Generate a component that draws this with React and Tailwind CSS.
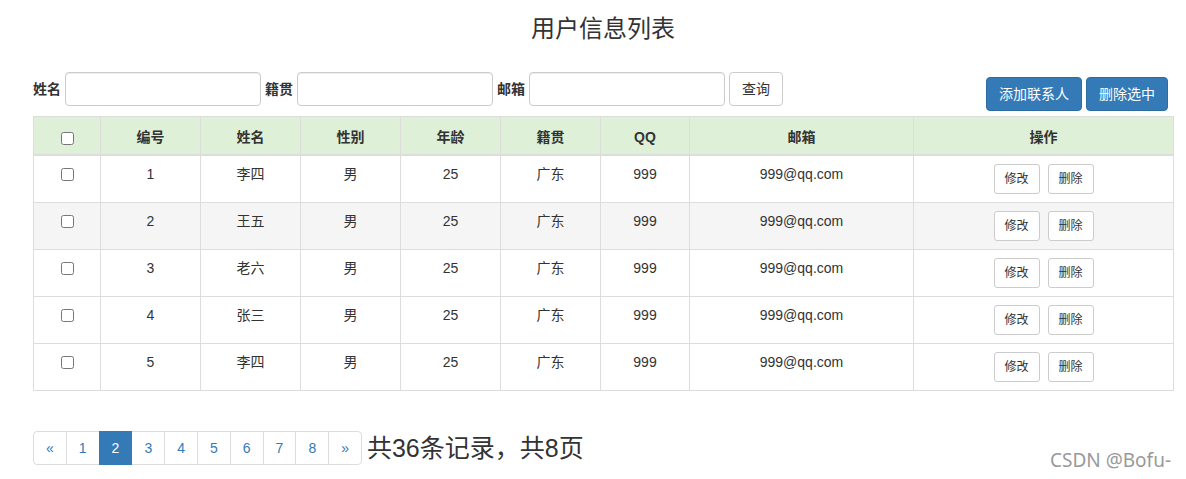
import React from "react";

const rows = [
  { id: 1, name: "李四" },
  { id: 2, name: "王五", hover: true },
  { id: 3, name: "老六" },
  { id: 4, name: "张三" },
  { id: 5, name: "李四" },
];

const cols = [
  { w: "w-[67px]", label: null },
  { w: "w-[100px]", label: "编号" },
  { w: "w-[100px]", label: "姓名" },
  { w: "w-[100px]", label: "性别" },
  { w: "w-[100px]", label: "年龄" },
  { w: "w-[100px]", label: "籍贯" },
  { w: "w-[89px]", label: "QQ" },
  { w: "w-[224px]", label: "邮箱" },
  { w: "w-[260px]", label: "操作" },
];

function Field({ label }) {
  return (
    <>
      <label className="font-bold text-[14px] leading-[20px] text-[#333]">{label}</label>
      <input
        type="text"
        className="w-[196px] h-[34px] border border-[#ccc] rounded-[4px] px-3 shadow-[inset_0_1px_1px_rgba(0,0,0,0.075)] bg-white outline-none"
      />
    </>
  );
}

export default function App() {
  const pages = ["«", "1", "2", "3", "4", "5", "6", "7", "8", "»"];
  return (
    <div className="relative w-[1186px] h-[479px] bg-white text-[#333] font-['Liberation_Sans','Noto_Sans_CJK_SC',sans-serif] text-[14px] leading-[20px]">
      <div className="ml-[33px] w-[1140px] pt-[16px]">
        <h3 className="text-center text-[24px] leading-[26px] font-normal text-[#333]">用户信息列表</h3>

        <div className="mt-[30px] h-[44px] flex justify-between items-start">
          <div className="flex items-center gap-1">
            <Field label="姓名" />
            <Field label="籍贯" />
            <Field label="邮箱" />
            <button className="h-[34px] px-3 border border-[#ccc] rounded-[4px] bg-white text-[#333] text-[14px]">查询</button>
          </div>
          <div className="flex gap-1 mt-[5px] mr-[5px]">
            <button className="h-[34px] w-[96px] border border-[#2e6da4] rounded-[4px] bg-[#337ab7] text-white text-[14px]">添加联系人</button>
            <button className="h-[34px] w-[82px] border border-[#2e6da4] rounded-[4px] bg-[#337ab7] text-white text-[14px]">删除选中</button>
          </div>
        </div>

        <table className="w-[1140px] border-collapse table-fixed border border-[#ddd]">
          <thead>
            <tr className="bg-[#dff0d8]">
              {cols.map((c, i) => (
                <th
                  key={i}
                  className={`${c.w} border border-[#ddd] border-b-2 px-2 pt-2 pb-[7px] font-bold text-center align-bottom h-[38px]`}
                >
                  {c.label === null ? (
                    <input type="checkbox" className="w-[13px] h-[13px] align-middle mt-[1px]" />
                  ) : (
                    c.label
                  )}
                </th>
              ))}
            </tr>
          </thead>
          <tbody>
            {rows.map((r) => (
              <tr key={r.id} className={r.hover ? "bg-[#f5f5f5]" : "bg-white"}>
                <td className="border border-[#ddd] p-2 text-center align-top h-[47px]">
                  <input type="checkbox" className="w-[13px] h-[13px] mt-[4px]" />
                </td>
                <td className="border border-[#ddd] p-2 text-center align-top">{r.id}</td>
                <td className="border border-[#ddd] p-2 text-center align-top">{r.name}</td>
                <td className="border border-[#ddd] p-2 text-center align-top">男</td>
                <td className="border border-[#ddd] p-2 text-center align-top">25</td>
                <td className="border border-[#ddd] p-2 text-center align-top">广东</td>
                <td className="border border-[#ddd] p-2 text-center align-top">999</td>
                <td className="border border-[#ddd] p-2 text-center align-top">999@qq.com</td>
                <td className="border border-[#ddd] p-2 align-top">
                  <div className="flex justify-center gap-2">
                    <button className="h-[30px] w-[46px] border border-[#ccc] rounded-[3px] bg-white text-[12px] text-[#333]">修改</button>
                    <button className="h-[30px] w-[46px] border border-[#ccc] rounded-[3px] bg-white text-[12px] text-[#333]">删除</button>
                  </div>
                </td>
              </tr>
            ))}
          </tbody>
        </table>

        <div className="mt-[40px] flex items-center">
          <ul className="flex">
            {pages.map((p, i) => {
              const active = p === "2";
              const first = i === 0;
              const last = i === pages.length - 1;
              return (
                <li
                  key={i}
                  className={`${first ? "" : "-ml-px"} w-[33.8px] h-[34px] flex items-center justify-center border ${
                    active ? "bg-[#337ab7] border-[#337ab7] text-white relative z-10" : "bg-white border-[#ddd] text-[#337ab7]"
                  } ${first ? "rounded-l-[4px]" : ""} ${last ? "rounded-r-[4px]" : ""} text-[14px]`}
                >
                  {p}
                </li>
              );
            })}
          </ul>
          <span className="ml-[5px] text-[25px] leading-[34px] text-[#333]">共36条记录，共8页</span>
        </div>
      </div>

      <div className="absolute left-[1050px] top-[448px] text-[19px] leading-[24px] text-[#999] font-['Noto_Sans','Noto_Sans_CJK_SC',sans-serif]">
        CSDN @Bofu-
      </div>
    </div>
  );
}
